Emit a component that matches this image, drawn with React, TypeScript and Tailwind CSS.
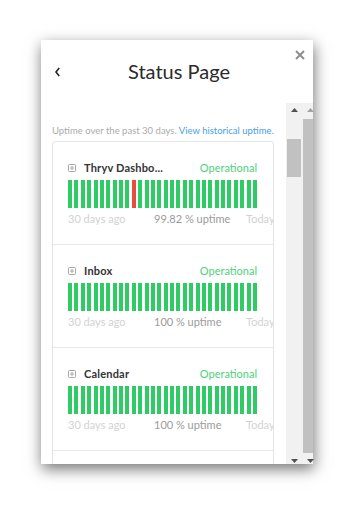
import React from 'react'

const font = { fontFamily: 'Lato, "Open Sans", sans-serif' }

type Service = { name: string; uptime: string; down: number[] }

const services: Service[] = [
  { name: 'Thryv Dashbo...', uptime: '99.82', down: [10] },
  { name: 'Inbox', uptime: '100', down: [] },
  { name: 'Calendar', uptime: '100', down: [] },
]

function PlusBox() {
  return (
    <svg width="8" height="8" viewBox="0 0 8 8" className="shrink-0">
      <rect x="0.5" y="0.5" width="7" height="7" rx="1" fill="none" stroke="#a6a6a6" strokeWidth="1" />
      <path d="M4 2v4M2 4h4" stroke="#a6a6a6" strokeWidth="1" />
    </svg>
  )
}

function ServiceRow({ s }: { s: Service }) {
  return (
    <div className="px-[15px] pt-[20px] pb-[18px] border-b border-[#e8e8e8]">
      <div className="flex items-center justify-between w-[189px] h-[12px]">
        <div className="flex items-center gap-[8px]">
          <PlusBox />
          <span className="text-[11px] leading-[12px] font-bold tracking-[0.2px] text-[#333]">{s.name}</span>
        </div>
        <span className="text-[11px] leading-[12px] text-[#4dd37c]">Operational</span>
      </div>
      <div className="mt-[6px] flex justify-between w-[189px] h-[28px]">
        {Array.from({ length: 30 }).map((_, i) => (
          <div key={i} className={s.down.includes(i) ? 'w-[4px] bg-[#e74c3c]' : 'w-[4px] bg-[#2fcc66]'} />
        ))}
      </div>
      <div className="mt-[4px] flex text-[11px] leading-[14px] whitespace-nowrap">
        <span className="w-[86px] shrink-0 text-[#d2d2d2]">30 days ago</span>
        <span className="w-[92px] shrink-0 text-[#9b9b9b]">{s.uptime} % uptime</span>
        <span className="shrink-0 text-[#d2d2d2]">Today</span>
      </div>
    </div>
  )
}

function Arrow({ up, color }: { up: boolean; color: string }) {
  return (
    <svg width="7" height="4" viewBox="0 0 7 4">
      <polygon points={up ? '3.5,0 7,4 0,4' : '0,0 7,0 3.5,4'} fill={color} />
    </svg>
  )
}

export default function App() {
  return (
    <div className="w-[356px] h-[522px] bg-white overflow-hidden" style={font}>
      <div className="ml-[41px] mt-[40px] w-[272px] h-[424px] bg-white relative flex flex-col shadow-[1px_5px_14px_rgba(0,0,0,0.55)]">
        {/* Close */}
        <button className="absolute top-[10px] right-[8px] w-[10px] h-[10px]">
          <svg width="10" height="10" viewBox="0 0 10 10">
            <path d="M1 1l8 8M9 1l-8 8" stroke="#8d8d8d" strokeWidth="2" />
          </svg>
        </button>

        {/* Header */}
        <div className="h-[63px] shrink-0 flex items-start pl-[14px] pr-[15px] pt-[19px]">
          <svg width="5" height="10" viewBox="0 0 5 10" className="mt-[8px] shrink-0">
            <polyline points="4.2,1 1,5 4.2,9" fill="none" stroke="#222" strokeWidth="1.6" />
          </svg>
          <div className="flex-1 text-center text-[20px] leading-[24px] text-[#2b2b2b]">Status Page</div>
        </div>

        {/* Body */}
        <div className="flex-1 min-h-0 flex">
          <div className="flex-1 overflow-hidden pl-[11px] pt-[22px]">
            <p className="text-[9.5px] leading-[12px] whitespace-nowrap text-[#ababab]">
              Uptime over the past 30 days. <span className="text-[#4a9fe0]">View historical uptime.</span>
            </p>
            <div className="mt-[4px] w-[222px] border border-[#e4e4e4] rounded-[3px] overflow-hidden">
              {services.map((s) => (
                <ServiceRow key={s.name} s={s} />
              ))}
              <div className="h-[60px]" />
            </div>
          </div>

          {/* inner scrollbar */}
          <div className="w-[17px] shrink-0 bg-[#f1f1f1] flex flex-col">
            <div className="h-[14px] flex items-center justify-center">
              <Arrow up color="#505050" />
            </div>
            <div className="mt-[22px] mx-[1px] mr-[2px] h-[38px] bg-[#c1c1c1]" />
            <div className="flex-1" />
            <div className="h-[5px] flex items-start justify-center">
              <Arrow up={false} color="#505050" />
            </div>
          </div>

          {/* outer scrollbar */}
          <div className="w-[10px] shrink-0 bg-[#f1f1f1] flex flex-col">
            <div className="h-[14px] flex items-center justify-end -mr-[1px]">
              <Arrow up color="#a3a3a3" />
            </div>
            <div className="mt-[2px] h-[334px] bg-[#c1c1c1]" />
            <div className="flex-1" />
            <div className="h-[5px] flex items-start justify-end -mr-[1px]">
              <Arrow up={false} color="#505050" />
            </div>
          </div>
        </div>
      </div>
    </div>
  )
}
